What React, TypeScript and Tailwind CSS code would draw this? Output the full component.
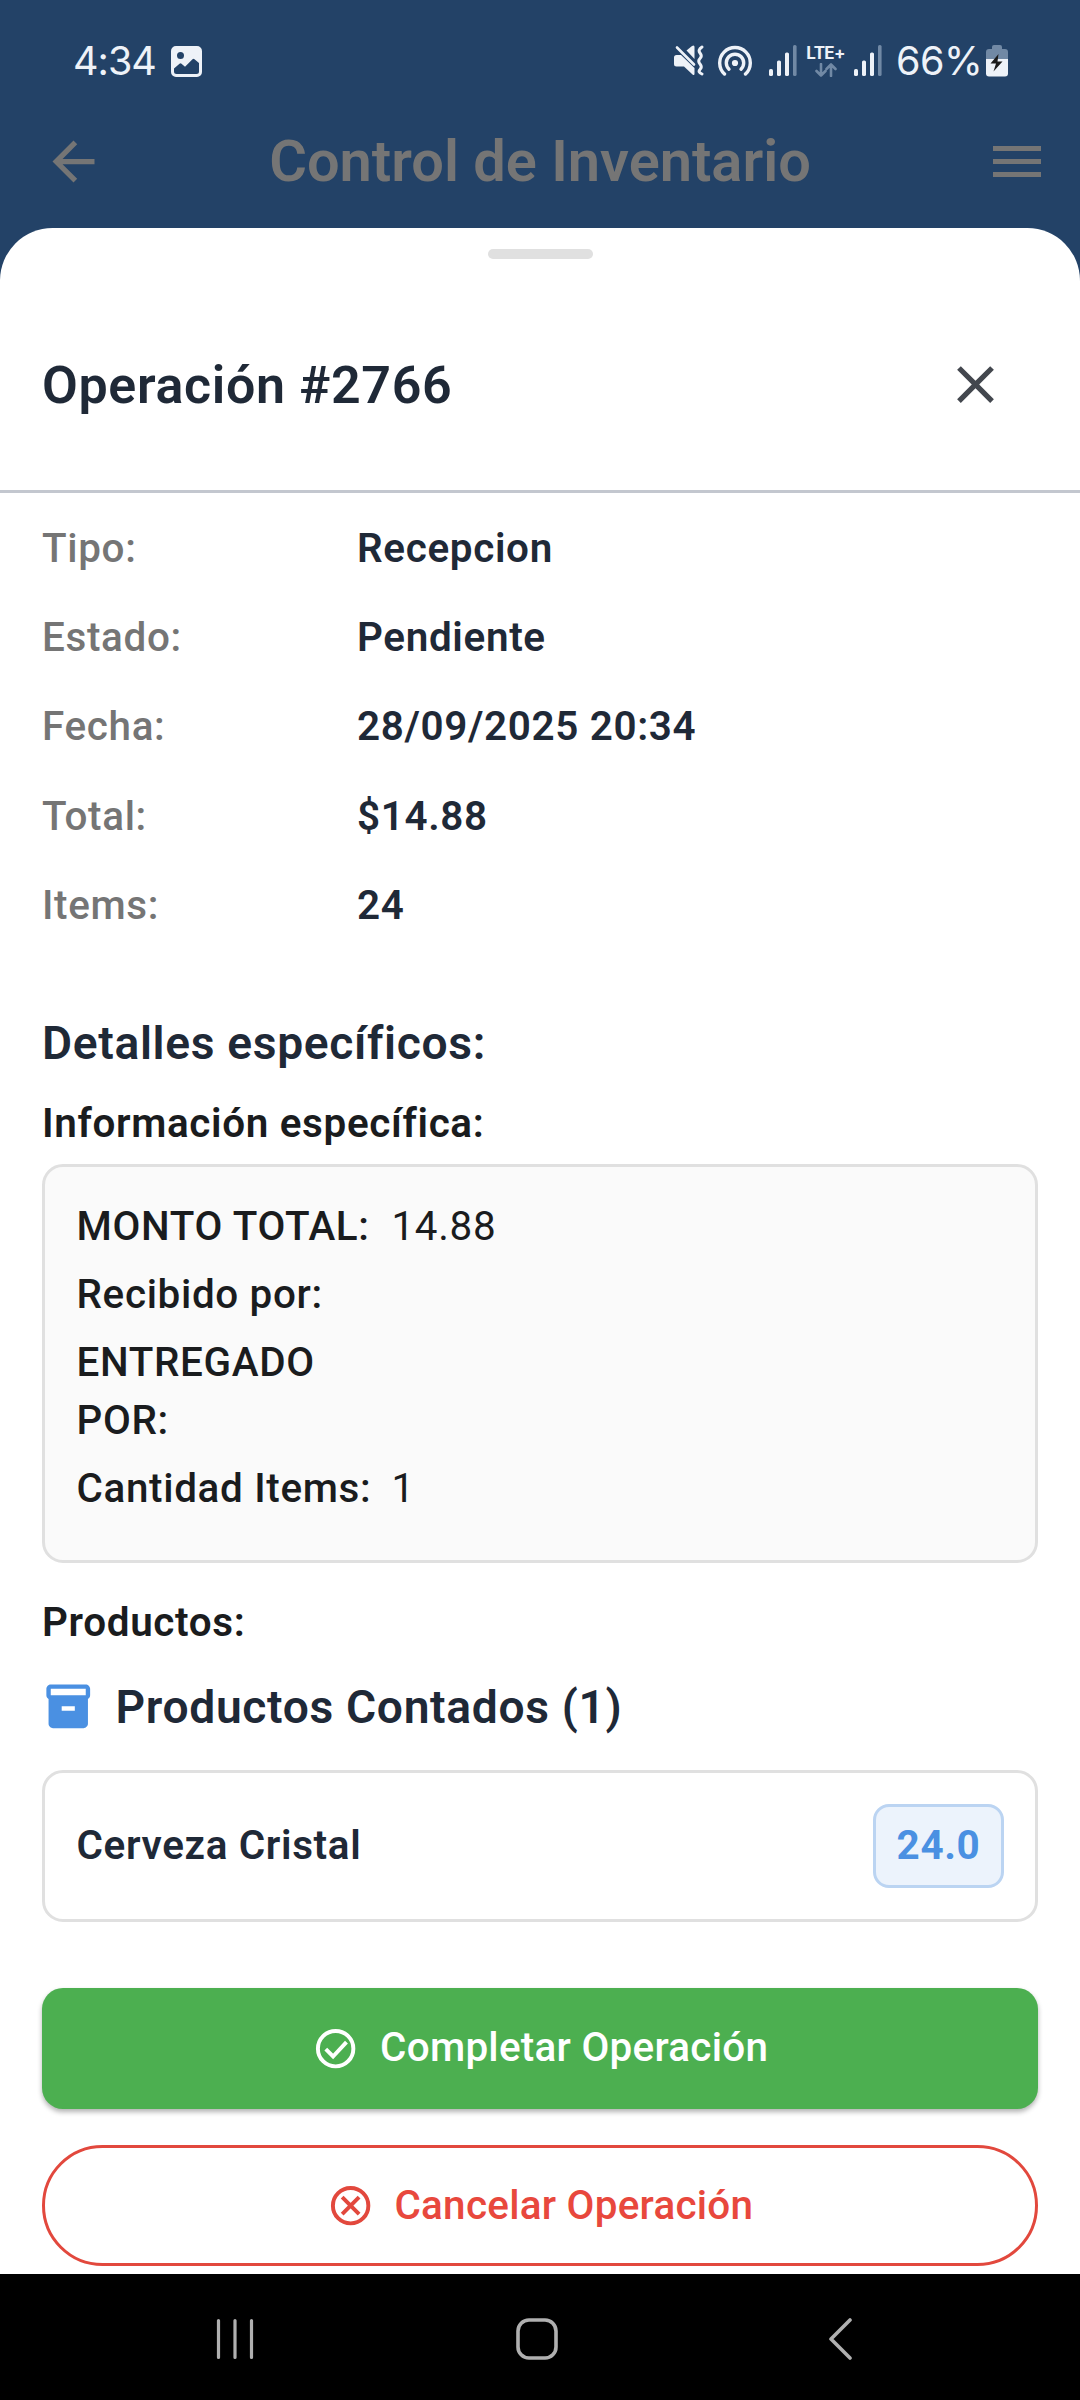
import { MdArrowBack, MdClose, MdInventory2 } from 'react-icons/md';

const details = [
  { label: 'Tipo:', value: 'Recepcion' },
  { label: 'Estado:', value: 'Pendiente' },
  { label: 'Fecha:', value: '28/09/2025 20:34' },
  { label: 'Total:', value: '$14.88' },
  { label: 'Items:', value: '24' },
];

const info = [
  { label: ['MONTO TOTAL:'], value: '14.88' },
  { label: ['Recibido por:'], value: '' },
  { label: ['ENTREGADO', 'POR:'], value: '' },
  { label: ['Cantidad Items:'], value: '1' },
];

function Signal() {
  return (
    <svg width="28" height="31" viewBox="0 0 28 31" fill="#eef2f8">
      <rect x="0" y="24" width="4" height="7" rx="1.6" />
      <rect x="8" y="15.5" width="4" height="15.5" rx="1.6" />
      <rect x="16" y="7.5" width="4" height="23.5" rx="1.6" />
      <rect x="24" y="0" width="3.6" height="31" rx="1.6" fill="#7189a5" />
    </svg>
  );
}

function StatusBar() {
  return (
    <div className="flex h-[121px] shrink-0 items-center justify-between pr-[72px] pl-[73px] text-[#eef2f8]">
      <div className="flex items-center">
        <span className="w-[98px] font-['Inter'] text-[39.5px] leading-[60px] font-normal tracking-[-1px] whitespace-nowrap">4:34</span>
        <svg width="31" height="31" viewBox="0 0 31 31" className="mt-[2px]">
          <path
            fillRule="evenodd"
            fill="#eef2f8"
            d="M5 0H26a5 5 0 0 1 5 5V26a5 5 0 0 1-5 5H5a5 5 0 0 1-5-5V5a5 5 0 0 1 5-5ZM9.500 6a3.500 3.500 0 1 0 0 7a3.500 3.500 0 0 0 0-7ZM3 22.500V25.500a2.500 2.500 0 0 0 2.500 2.500H25.500a2.500 2.500 0 0 0 2.500-2.500V17L23.500 13.300a1.500 1.500 0 0 0-2 0L14 20.700L10.500 17.700a1.500 1.500 0 0 0-2 0Z"
          />
        </svg>
      </div>
      <div className="flex items-center">
        <svg width="30" height="31" viewBox="0 0 30 31" fill="#eef2f8">
          <path d="M0 12.500Q0 10 2.500 10H7L20.500 23V28.500Q20.500 31 18.500 29.500L10 21.500H2.500Q0 21.500 0 19Z" />
          <path d="M12.500 5.500L18 .9Q20.500-.5 20.500 2V14Z" />
          <path d="M3 2.500L20 19.500" stroke="#eef2f8" strokeWidth="2.600" strokeLinecap="round" />
          <path
            d="M28 2Q23.500 5 26 8T26 13.500T26 19T26 24.500T28 29"
            fill="none"
            stroke="#eef2f8"
            strokeWidth="3"
            strokeLinecap="round"
          />
        </svg>
        <svg width="34" height="31" viewBox="0 0 34 31" className="ml-[14px]" fill="none" stroke="#eef2f8" strokeWidth="3.400" strokeLinecap="round">
          <path d="M6.500 29A15.300 15.300 0 1 1 27.500 29" />
          <path d="M11 24.200A8.700 8.700 0 1 1 23 24.200" />
          <circle cx="17" cy="18" r="3.100" fill="#eef2f8" stroke="none" />
        </svg>
        <div className="ml-[17px] flex"><Signal /></div>
        <div className="ml-[10px] flex w-[37px] flex-col items-center gap-[2px]">
          <span className="font-['Inter'] text-[17px] leading-[16px] font-bold tracking-[-0.7px] whitespace-nowrap">LTE+</span>
          <svg width="22" height="14" viewBox="0 0 22 14" fill="none" stroke="#7189a5" strokeWidth="2.600" strokeLinecap="round" strokeLinejoin="round">
            <path d="M6 1V12.500M1.500 8L6 12.500L10.500 8M16 13V1.500M11.500 6L16 1.500L20.500 6" />
          </svg>
        </div>
        <div className="ml-[10px] flex"><Signal /></div>
        <span className="ml-[14px] w-[90px] font-['Inter'] text-[39.5px] leading-[60px] font-normal tracking-[-0.5px] whitespace-nowrap">66%</span>
        <svg width="22" height="32" viewBox="0 0 22 32">
          <path d="M6 2a2 2 0 0 1 2-2h6a2 2 0 0 1 2 2v2h3a3 3 0 0 1 3 3v7H0V7a3 3 0 0 1 3-3h3Z" fill="#7189a5" />
          <path d="M0 14H22V28.500a3 3 0 0 1-3 3H3a3 3 0 0 1-3-3Z" fill="#eef2f8" />
          <path d="M12.500 9L4.500 18.500H10L7.500 26.500L16.500 16.500H11.500Z" fill="#1b1b1b" />
        </svg>
      </div>
    </div>
  );
}

function NavBar() {
  return (
    <div className="flex h-[126px] shrink-0 items-start bg-black pt-[44px]">
      <svg width="40" height="42" viewBox="0 0 40 42" className="ml-[215px]" stroke="#b0b0b0" strokeWidth="3.200" strokeLinecap="round">
        <path d="M3.500 2.500V39.500M20 2.500V39.500M36.500 2.500V39.500" />
      </svg>
      <svg width="42" height="42" viewBox="0 0 42 42" className="ml-[261px]" fill="none" stroke="#b0b0b0" strokeWidth="3.600">
        <rect x="2" y="2" width="38" height="38" rx="11" />
      </svg>
      <svg width="26" height="42" viewBox="0 0 26 42" className="ml-[269px]" fill="none" stroke="#b0b0b0" strokeWidth="3.600" strokeLinecap="round" strokeLinejoin="round">
        <path d="M23 2L4 21L23 40" />
      </svg>
    </div>
  );
}

export default function App() {
  return (
    <div className="flex h-[2400px] w-[1080px] flex-col overflow-hidden bg-[#234267] font-['Roboto',sans-serif] text-[40.425px] font-medium text-[#1a1c1e]">
      <StatusBar />
      <header className="flex h-[79px] shrink-0 items-center justify-between text-[#757575]">
        <div className="w-[105px] pt-[1px] pl-[42px]">
          <MdArrowBack size={63} />
        </div>
        <h1 className="text-[57.75px] leading-[78px] font-semibold whitespace-nowrap">Control de Inventario</h1>
        <div className="flex w-[105px] flex-col gap-[8px] pt-[2px] pl-[18px]">
          <div className="h-[5px] w-[48px] bg-[#757575]" />
          <div className="h-[5px] w-[48px] bg-[#757575]" />
          <div className="h-[5px] w-[48px] bg-[#757575]" />
        </div>
      </header>
      <main className="mt-[27.500px] flex min-h-0 grow flex-col rounded-t-[52.5px] bg-white tracking-[0.656px]">
        <div className="mt-[21px] h-[10.500px] w-[105px] shrink-0 self-center rounded-full bg-[#e0e0e0]" />
        <div className="flex h-[231px] shrink-0 items-center justify-between pt-[20px] pr-[73.500px] pl-[42px] text-[#1f2937]">
          <h2 className="pt-[2px] text-[51.975px] leading-[70px] font-semibold">Operación #2766</h2>
          <MdClose size={63} color="#43474e" />
        </div>
        <div className="h-[2.600px] shrink-0 bg-[#c3c7cf]" />
        <dl className="mt-[12px] shrink-0">
          {details.map((d) => (
            <div key={d.label} className="flex h-[89.25px] items-center pl-[42px]">
              <dt className="w-[315px] text-[#757575]">{d.label}</dt>
              <dd className="font-semibold text-[#1f2937]">{d.value}</dd>
            </div>
          ))}
        </dl>
        <section className="flex flex-col px-[42px]">
          <h3 className="mt-[60px] text-[46.2px] leading-[64px] font-semibold text-[#1f2937]">Detalles específicos:</h3>
          <h4 className="mt-[19px] leading-[60px] font-semibold">Información específica:</h4>
          <div className="mt-[10px] flex h-[399px] flex-col gap-[10.300px] rounded-[21px] border-[3px] border-[#e0e0e0] bg-[#fafafa] px-[31.500px] pt-[31px] leading-[57.75px]">
            {info.map((i) => (
              <div key={i.label[0]} className="flex">
                <div className="w-[315px] shrink-0">
                  {i.label.map((line) => (
                    <div key={line} className="whitespace-nowrap">{line}</div>
                  ))}
                </div>
                <span className="font-normal">{i.value}</span>
              </div>
            ))}
          </div>
          <h4 className="mt-[30px] leading-[60px] font-semibold">Productos:</h4>
          <div className="mt-[21.500px] flex items-center gap-[21px]">
            <MdInventory2 size={52.5} color="#4a90e2" className="mb-[3px]" />
            <h3 className="text-[46.2px] leading-[66px] font-semibold text-[#1f2937]">Productos Contados (1)</h3>
          </div>
          <div className="mt-[29.900px] flex h-[151.500px] items-center justify-between rounded-[21px] border-[3px] border-[#e0e0e0] px-[31.500px] text-[#1f2937]">
            <span className="font-semibold">Cerveza Cristal</span>
            <span className="flex h-[84px] w-[131px] items-center justify-center rounded-[16px] border-[3px] border-[#bbd4f2] bg-[#ecf3fc] pl-[1px] font-bold text-[#4a90e2]">24.0</span>
          </div>
          <button className="mt-[66px] flex h-[121px] items-center justify-center gap-[21px] rounded-[21px] bg-[#4caf50] tracking-[0.2625px] text-white shadow-[0_3px_5px_rgba(0,0,0,0.3)]">
            <svg width="47.25" height="47.25" viewBox="0 0 24 24" fill="none" stroke="white" strokeWidth="2">
              <circle cx="12" cy="12" r="9" />
              <path d="M7 12.300L10.700 16L17.500 8.700" />
            </svg>
            <span className="pt-[1px]">Completar Operación</span>
          </button>
          <button className="mt-[36px] flex h-[121px] items-center justify-center gap-[20.500px] rounded-full border-[3px] border-[#e2483d] tracking-[0.2625px] text-[#e8483d]">
            <svg width="47.25" height="47.25" viewBox="0 0 24 24" fill="none" stroke="#e2483d" strokeWidth="2">
              <circle cx="12" cy="12" r="9" />
              <path d="M7.700 7.700L16.300 16.300M16.300 7.700L7.700 16.300" />
            </svg>
            <span className="pt-[2px]">Cancelar Operación</span>
          </button>
        </section>
      </main>
      <NavBar />
    </div>
  );
}
